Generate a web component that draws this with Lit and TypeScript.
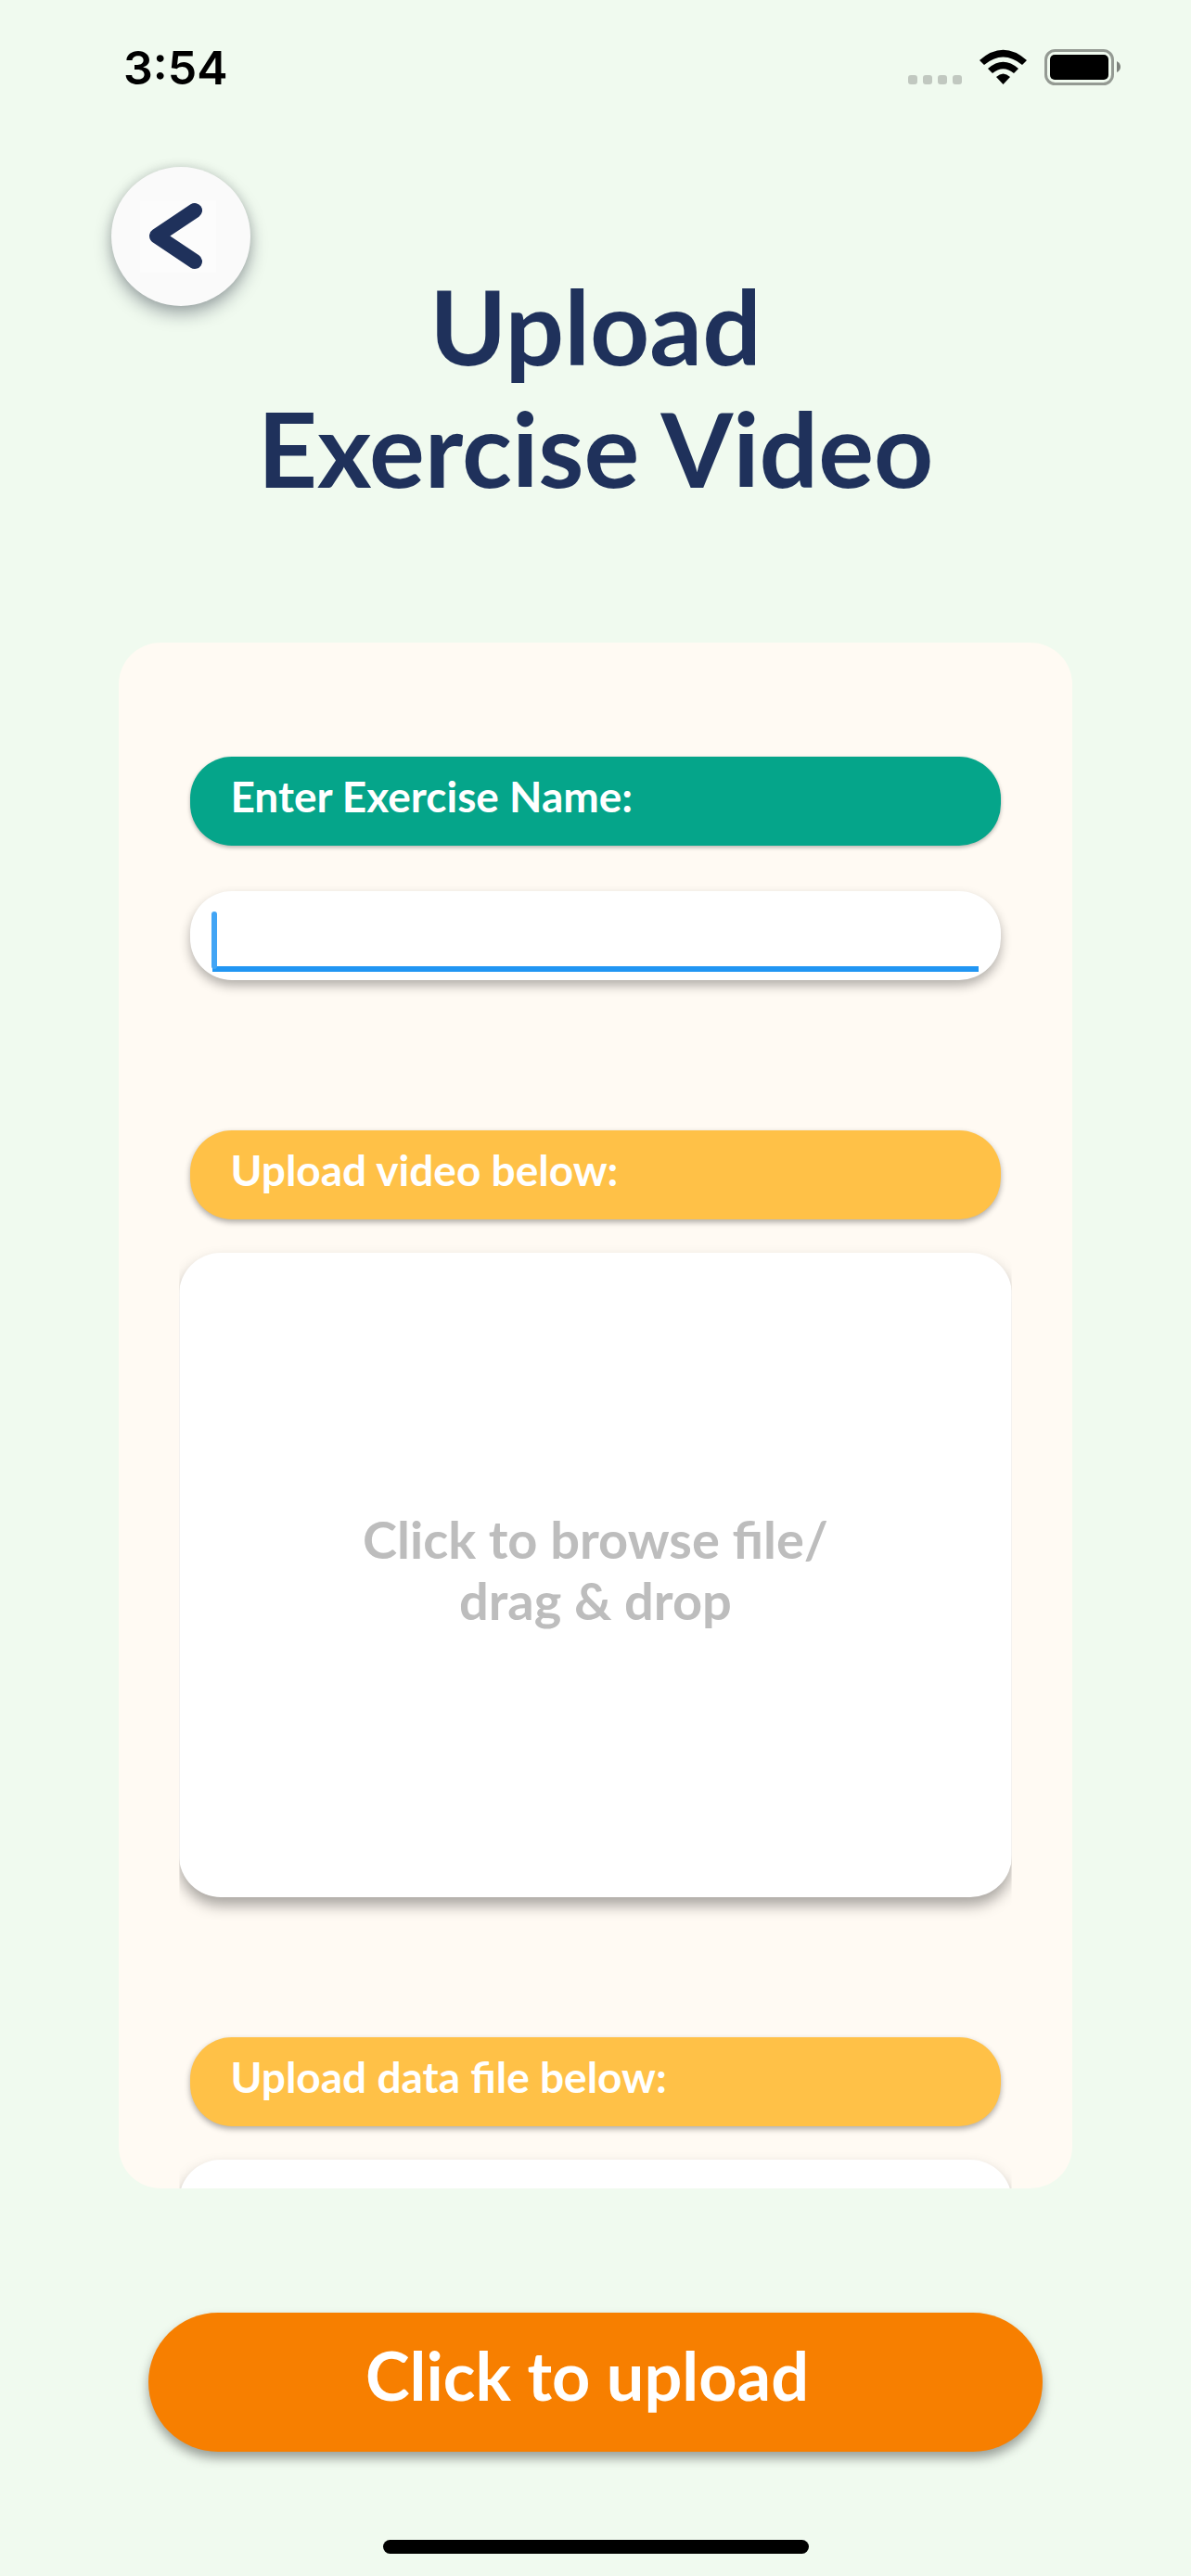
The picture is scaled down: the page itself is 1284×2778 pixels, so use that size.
import { LitElement, html, css, svg, nothing } from "lit";
import { customElement, property } from "lit/decorators.js";

@customElement("status-bar")
class StatusBar extends LitElement {
  static styles = css`
    :host {
      display: flex;
      justify-content: space-between;
      align-items: flex-start;
      padding: 48px 76px 0 133px;
      font: 600 50px/50px Inter, "Liberation Sans", sans-serif;
      color: #000;
    }
    .indicators {
      display: block;
      width: 229px;
      height: 48px;
    }
  `;

  render() {
    return html`
      <time>3:54</time>
      <svg class="indicators" viewBox="979 48 229 48" aria-hidden="true">
        ${[979, 995, 1011, 1027].map(
          (x) => svg`<rect x=${x} y="81" width="10" height="10" rx="3" fill="#c1c8c0" />`
        )}
        <path d="M1056 65 Q1081.500 42.500 1107 65 L1102 70 Q1081.500 53 1061 70 Z" />
        <path d="M1065 74 Q1081.500 59.500 1098 74 L1093 79 Q1081.500 69.500 1070 79 Z" />
        <path d="M1074 83 Q1081.500 76 1089 83 L1081.500 91 Z" />
        <rect x="1127.500" y="54.500" width="72" height="36" rx="10" fill="none" stroke="#949a93" stroke-width="3" />
        <rect x="1132" y="59" width="63" height="27" rx="5" />
        <path d="M1204 66 Q1208 68 1208 72 Q1208 76 1204 78 Z" fill="#7d827c" />
      </svg>
    `;
  }
}

@customElement("upload-field")
class UploadField extends LitElement {
  @property() label = "";
  @property({ attribute: false }) hint: string[] = [];

  static styles = css`
    :host {
      display: block;
    }
    .pill {
      display: block;
      box-sizing: border-box;
      margin: 0 12px 36px;
      padding: 0 43px 10px;
      line-height: 86px;
      border-radius: 45px;
      background: #ffc147;
      color: #fff;
      box-shadow: 0 3px 6px rgba(0, 0, 0, 0.32);
    }
    .zone {
      position: relative;
      display: flex;
      align-items: center;
      justify-content: center;
      box-sizing: border-box;
      height: 695px;
      padding-bottom: 12px;
      border-radius: 45px;
      background: #fff;
      color: #bdbdbd;
      font-size: 56px;
      line-height: 66px;
      text-align: center;
      box-shadow: 0 9px 15px rgba(0, 0, 0, 0.34);
      clip-path: inset(-12px 0 -36px 0);
    }
    .line {
      display: block;
    }
    .file {
      position: absolute;
      inset: 0;
      width: 100%;
      height: 100%;
      opacity: 0;
      cursor: pointer;
    }
  `;

  render() {
    return html`
      <label class="pill" for="file">${this.label}</label>
      <div class="zone">
        ${this.hint.length
          ? html`<div>${this.hint.map((t) => html`<span class="line">${t}</span>`)}</div>`
          : nothing}
        <input class="file" id="file" type="file" />
      </div>
    `;
  }
}

@customElement("app-root")
class AppRoot extends LitElement {
  static styles = css`
    :host {
      display: flex;
      flex-direction: column;
      box-sizing: border-box;
      height: 100vh;
      background: #f0faef;
      font-family: Lato, "Open Sans", sans-serif;
      font-weight: 700;
      font-size: 46px;
    }
    .header {
      display: grid;
      margin-top: 82px;
      padding: 0 120px;
    }
    .back,
    .title {
      grid-area: 1 / 1;
    }
    .back {
      justify-self: start;
      align-self: start;
      display: grid;
      place-items: center;
      box-sizing: border-box;
      width: 150px;
      height: 150px;
      padding: 0 6px 0 0;
      border: 0;
      border-radius: 50%;
      background: #fafafa;
      box-shadow: 0 9px 18px rgba(20, 30, 50, 0.34), 0 0 12px rgba(0, 0, 0, 0.12);
      z-index: 1;
      cursor: pointer;
    }
    .chevron {
      width: 82px;
      height: 78px;
    }
    .title {
      margin: 0;
      padding-top: 105px;
      font-size: 112px;
      font-weight: 700;
      line-height: 132px;
      color: #1f315b;
      text-align: center;
    }
    .line {
      display: block;
    }
    .card {
      flex: 1;
      min-height: 0;
      box-sizing: border-box;
      margin: 144px 10% 0;
      padding: 123px 65px 0;
      border-radius: 45px;
      background: #fffaf3;
      overflow: hidden auto;
      scrollbar-width: none;
    }
    .name {
      padding: 0 12px;
      margin-bottom: 162px;
    }
    .pill {
      display: block;
      box-sizing: border-box;
      margin-bottom: 49px;
      padding: 0 43px 10px;
      border-radius: 45px;
      background: #05a58a;
      color: #fff;
      line-height: 86px;
      box-shadow: 0 2px 4px rgba(0, 0, 0, 0.28);
    }
    .box {
      position: relative;
      box-sizing: border-box;
      height: 96px;
      padding: 20px 24px 9px;
      border-radius: 45px;
      background: #fff;
      box-shadow: 0 6px 12px rgba(0, 0, 0, 0.3);
    }
    .input {
      display: block;
      box-sizing: border-box;
      width: 100%;
      height: 67px;
      padding: 0 8px;
      border: 0;
      border-bottom: 6px solid #2196f3;
      background: none;
      font: inherit;
      color: #1f315b;
      outline: none;
      caret-color: transparent;
    }
    .caret {
      position: absolute;
      left: 23px;
      top: 22px;
      width: 6px;
      height: 62px;
      border-radius: 3px;
      background: #42a5f5;
    }
    .upload {
      display: block;
      margin-bottom: 151px;
    }
    .submit {
      height: 150px;
      margin: 134px 160px 95px;
      padding: 0 18px 16px 0;
      border: 0;
      border-radius: 75px;
      background: #f77f00;
      color: #fff;
      font: inherit;
      font-size: 72px;
      box-shadow: 0 7px 12px rgba(0, 0, 0, 0.36);
      cursor: pointer;
    }
    .home {
      align-self: center;
      flex: none;
      width: 459px;
      height: 15px;
      margin-bottom: 24px;
      border-radius: 8px;
      background: #000;
    }
  `;

  render() {
    return html`
      <status-bar></status-bar>
      <header class="header">
        <button class="back" type="button" aria-label="Back">
          <svg class="chevron" viewBox="0 0 82 78">
            <rect width="82" height="78" fill="#fcfcfc" />
            <path
              d="M59 11 L18 38.500 L59 66"
              fill="none"
              stroke="#1f315b"
              stroke-width="16"
              stroke-linecap="round"
              stroke-linejoin="round"
            />
          </svg>
        </button>
        <h1 class="title">
          <span class="line">Upload</span>
          <span class="line">Exercise Video</span>
        </h1>
      </header>
      <main class="card">
        <div class="name">
          <label class="pill" for="exercise">Enter Exercise Name:</label>
          <div class="box">
            <input class="input" id="exercise" type="text" />
            <span class="caret"></span>
          </div>
        </div>
        <upload-field
          class="upload"
          label="Upload video below:"
          .hint=${["Click to browse file/", "drag & drop"]}
        ></upload-field>
        <upload-field class="upload" label="Upload data file below:"></upload-field>
      </main>
      <button class="submit" type="button">Click to upload</button>
      <div class="home"></div>
    `;
  }
}
